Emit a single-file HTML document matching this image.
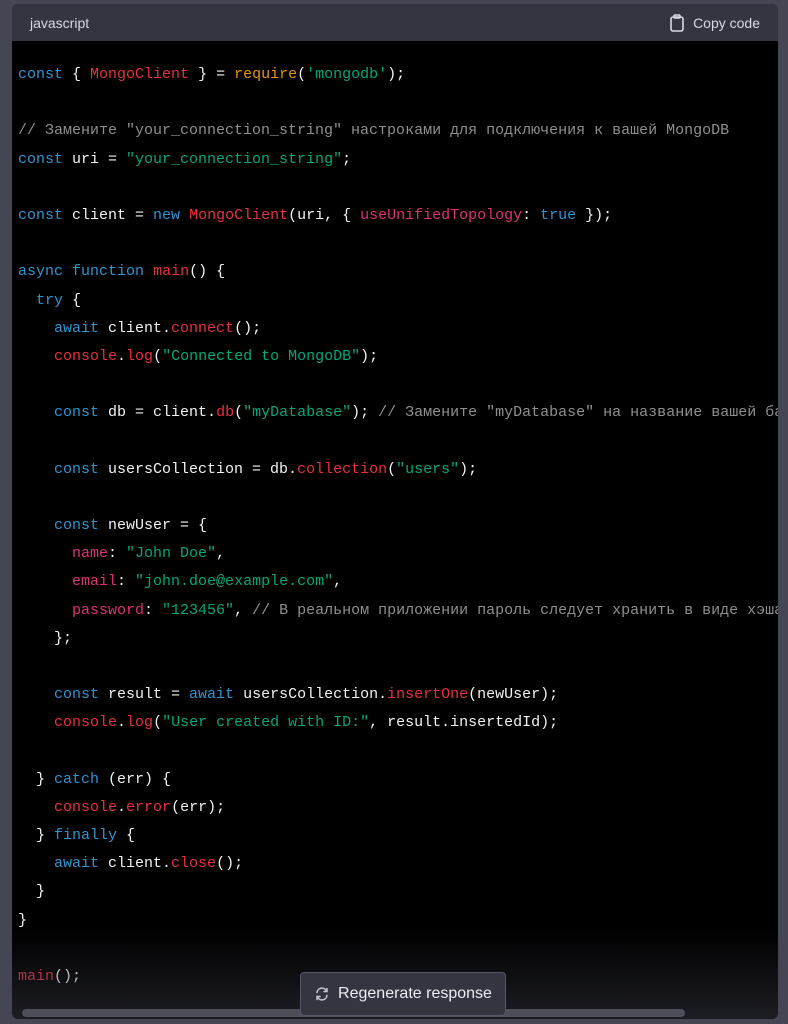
<!DOCTYPE html>
<html><head><meta charset="utf-8"><style>
html,body{margin:0;padding:0;width:788px;height:1024px;overflow:hidden;background:#444654;}
.card{position:absolute;left:12px;top:4px;width:766px;height:1015px;border-radius:6px;overflow:hidden;background:#000;}
.hdr{height:37px;background:#343541;color:#d9d9e3;font:14px "Liberation Sans",sans-serif;display:flex;align-items:center;justify-content:space-between;padding:0 18px 0 18px;}
.hdr .cp{display:flex;align-items:center;gap:8px;}
pre{margin:0;padding:20px 0 0 6px;font:15px/28.19px "Liberation Mono","DejaVu Sans Mono",monospace;color:#f2f2f2;white-space:pre;}
.k{color:#2e95d3}.r{color:#e8303e}.p{color:#df3079}.s{color:#00a67d}.o{color:#e9950c}.c{color:#8f8f8f}
.fade{position:absolute;left:0;right:0;bottom:0;height:90px;background:linear-gradient(to bottom,rgba(52,53,65,0),rgba(52,53,65,.55));}
.sb{position:absolute;left:22px;width:663px;top:1009px;height:8px;border-radius:4px;background:#4d4e5a;}
.btn{position:absolute;left:300px;top:972px;width:206px;height:44px;box-sizing:border-box;border:1px solid #565869;border-radius:4px;background:#343541;color:#ececf1;font:16px "Liberation Sans",sans-serif;display:flex;align-items:center;justify-content:center;gap:8px;}
</style></head><body>
<div class="card">
<div class="hdr"><span>javascript</span><span class="cp"><svg width="16" height="18" viewBox="0 0 16 18" fill="none" stroke="#d9d9e3" stroke-width="1.6"><rect x="2" y="3" width="12" height="14" rx="2"/><rect x="5" y="1" width="6" height="3" rx="1"/></svg>Copy code</span></div>
<pre><span class="k">const</span> { <span class="r">MongoClient</span> } = <span class="o">require</span>(<span class="s">'mongodb'</span>);

<span class="c">// Замените "your_connection_string" настроками для подключения к вашей MongoDB</span>
<span class="k">const</span> uri = <span class="s">"your_connection_string"</span>;

<span class="k">const</span> client = <span class="k">new</span> <span class="r">MongoClient</span>(uri, { <span class="p">useUnifiedTopology</span>: <span class="k">true</span> });

<span class="k">async</span> <span class="k">function</span> <span class="r">main</span>() {
  <span class="k">try</span> {
    <span class="k">await</span> client.<span class="r">connect</span>();
    <span class="r">console</span>.<span class="r">log</span>(<span class="s">"Connected to MongoDB"</span>);

    <span class="k">const</span> db = client.<span class="r">db</span>(<span class="s">"myDatabase"</span>); <span class="c">// Замените "myDatabase" на название вашей базы данных</span>

    <span class="k">const</span> usersCollection = db.<span class="r">collection</span>(<span class="s">"users"</span>);

    <span class="k">const</span> newUser = {
      <span class="p">name</span>: <span class="s">"John Doe"</span>,
      <span class="p">email</span>: <span class="s">"john.doe@example.com"</span>,
      <span class="p">password</span>: <span class="s">"123456"</span>, <span class="c">// В реальном приложении пароль следует хранить в виде хэша</span>
    };

    <span class="k">const</span> result = <span class="k">await</span> usersCollection.<span class="r">insertOne</span>(newUser);
    <span class="r">console</span>.<span class="r">log</span>(<span class="s">"User created with ID:"</span>, result.insertedId);

  } <span class="k">catch</span> (err) {
    <span class="r">console</span>.<span class="r">error</span>(err);
  } <span class="k">finally</span> {
    <span class="k">await</span> client.<span class="r">close</span>();
  }
}

<span class="r">main</span>();</pre>
<div class="fade"></div>
<div class="sb" style="left:10px;top:1005px"></div>
</div>
<div class="btn"><svg width="16" height="16" viewBox="0 0 16 16" fill="none" stroke="#c5c5d2" stroke-width="1.5" stroke-linecap="round"><path d="M3 6.5A5 5 0 0 1 12.5 5"/><path d="M13 2.5v3h-3"/><path d="M13 9.5A5 5 0 0 1 3.5 11"/><path d="M3 13.5v-3h3"/></svg>Regenerate response</div>
</body></html>
